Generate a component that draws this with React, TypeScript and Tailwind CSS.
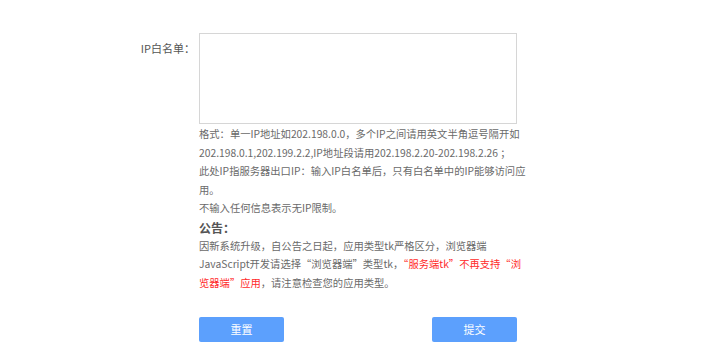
import React from 'react';

const font = { fontFamily: '"Noto Sans CJK SC", "Noto Sans", sans-serif' };

export default function App() {
  return (
    <div className="w-[716px] h-[361px] bg-white text-[#6a6a6a]" style={font}>
      <div className="flex pt-[33px]">
        <div className="w-[199px] pr-[4px] pt-[6px] text-right text-[11px] leading-[18px] text-[#555]">IP白名单：</div>
        <div className="flex flex-col">
          <textarea className="w-[318px] h-[91px] border border-[#d6d6d6] resize-none outline-none" />
          <div className="mt-[1px] text-[10.3px] leading-[18.5px] whitespace-nowrap">
            <p>格式：单一IP地址如202.198.0.0，多个IP之间请用英文半角逗号隔开如</p>
            <p>202.198.0.1,202.199.2.2,IP地址段请用202.198.2.20-202.198.2.26 ；</p>
            <p>此处IP指服务器出口IP：输入IP白名单后，只有白名单中的IP能够访问应</p>
            <p>用。</p>
            <p>不输入任何信息表示无IP限制。</p>
            <p className="text-[12px] font-bold leading-[19px] text-[#555]">公告：</p>
            <p>因新系统升级，自公告之日起，应用类型tk严格区分，浏览器端</p>
            <p>
              JavaScript开发请选择“浏览器端”类型tk，<span className="text-[#ff2a2a]">“服务端tk”不再支持“浏</span>
            </p>
            <p>
              <span className="text-[#ff2a2a]">览器端”应用</span>，请注意检查您的应用类型。
            </p>
          </div>
          <div className="flex justify-between mt-[25px] w-[318px]">
            <button className="w-[85px] h-[25px] rounded-[2px] bg-[#5ca0fd] text-white text-[11px]">重置</button>
            <button className="w-[85px] h-[25px] rounded-[2px] bg-[#5ca0fd] text-white text-[11px]">提交</button>
          </div>
        </div>
      </div>
    </div>
  );
}
